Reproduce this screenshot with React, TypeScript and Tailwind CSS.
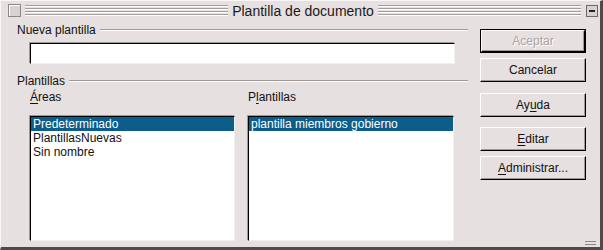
import React from 'react'

const font = "font-['Liberation_Sans',Arial,sans-serif]"

function Stripes() {
  return (
    <div className="flex-1 h-[11px] bg-[repeating-linear-gradient(to_bottom,#a29c9c_0px,#a29c9c_1px,#ffffff_1px,#ffffff_2px,transparent_2px,transparent_3px)]" />
  )
}

function GroupHeader({ label }: { label: string }) {
  return (
    <div className="flex items-center h-[14px] gap-[4px] leading-[14px]">
      <span>{label}</span>
      <div className="flex-1 h-[2px] border-t border-t-[#9e9898] border-b border-b-white" />
    </div>
  )
}

function Button({
  children,
  disabled,
  isDefault,
  className = '',
}: {
  children: React.ReactNode
  disabled?: boolean
  isDefault?: boolean
  className?: string
}) {
  const inner = (
    <div
      className={
        'h-full w-full flex items-center justify-center border border-t-white border-l-white border-b-black border-r-black shadow-[inset_-1px_-1px_0_#9e9898] leading-[14px] ' +
        (disabled ? 'text-[#aaa3a3] [text-shadow:1px_1px_0_#ffffff]' : 'text-[#111]')
      }
    >
      {children}
    </div>
  )
  if (isDefault) {
    return <div className={'h-[24px] w-[106px] border border-black ' + className}>{inner}</div>
  }
  return <div className={'h-[24px] w-[106px] ' + className}>{inner}</div>
}

function ListBox({ items, selected }: { items: string[]; selected: number }) {
  return (
    <div className="h-[125px] bg-white border border-t-black border-l-black border-b-[#f4f0f0] border-r-[#f4f0f0] shadow-[-1px_-1px_0_#9e9898]">
      {items.map((it, i) => (
        <div
          key={it}
          className={
            'h-[14px] leading-[14px] pl-[2px] whitespace-nowrap ' +
            (i === selected ? 'bg-[#0c5c8c] text-white' : 'text-[#111]')
          }
        >
          {it}
        </div>
      ))}
    </div>
  )
}

export default function App() {
  return (
    <div
      className={
        'w-[603px] h-[250px] bg-[#e6e0e0] border-l border-t border-l-[#f8f6f6] border-t-[#f8f6f6] border-r-[3px] border-b-[3px] border-r-[#4e4a4a] border-b-[#4e4a4a] relative overflow-hidden text-[12px] text-[#111] ' +
        font
      }
    >
      {/* title bar */}
      <div className="h-[19px] flex items-center">
        <div className="ml-[7px] w-[13px] h-[13px] border border-[#8c8686] bg-[#d8d2d2] shadow-[inset_1px_1px_0_#ffffff]" />
        <div className="ml-[4px] flex-1 flex items-center gap-[4px]">
          <Stripes />
          <span className="text-[14px] leading-[16px] text-[#1a1a1a]">Plantilla de documento</span>
          <Stripes />
        </div>
        <div className="ml-[5px] mr-[2px] w-[12px] h-[12px] border border-[#6e6a6a] bg-[#d8d2d2] flex items-center justify-center">
          <div className="w-[6px] h-[2px] bg-[#222]" />
        </div>
      </div>

      <div className="flex">
        {/* left part */}
        <div className="ml-[16px] w-[451px]">
          <div className="mt-[3px]">
            <GroupHeader label="Nueva plantilla" />
          </div>
          <div className="mt-[6px] ml-[13px] w-[425px] h-[21px] bg-white border border-t-black border-l-black border-b-[#f4f0f0] border-r-[#f4f0f0] shadow-[-1px_-1px_0_#9e9898]" />
          <div className="mt-[10px]">
            <GroupHeader label="Plantillas" />
          </div>
          <div className="ml-[13px] flex gap-[13px]">
            <div className="w-[205px]">
              <div className="mt-[2px] h-[14px] leading-[14px]">
                <span className="underline underline-offset-2">Á</span>reas
              </div>
              <div className="mt-[12px]">
                <ListBox items={['Predeterminado', 'PlantillasNuevas', 'Sin nombre']} selected={0} />
              </div>
            </div>
            <div className="w-[206px]">
              <div className="mt-[2px] h-[14px] leading-[14px]">
                P<span className="underline underline-offset-2">l</span>antillas
              </div>
              <div className="mt-[12px]">
                <ListBox items={['plantilla miembros gobierno']} selected={0} />
              </div>
            </div>
          </div>
        </div>

        {/* buttons */}
        <div className="ml-[12px] w-[106px] flex flex-col">
          <Button isDefault disabled className="mt-[9px]">
            Aceptar
          </Button>
          <Button className="mt-[5px]">Cancelar</Button>
          <Button className="mt-[11px]">
            <span>
              Ay<span className="underline underline-offset-2">u</span>da
            </span>
          </Button>
          <Button className="mt-[10px]">
            <span>
              <span className="underline underline-offset-2">E</span>ditar
            </span>
          </Button>
          <Button className="mt-[5px]">
            <span>
              <span className="underline underline-offset-2">A</span>dministrar...
            </span>
          </Button>
        </div>
      </div>

      {/* resize grip */}
      <div className="absolute right-[4px] bottom-[2px] w-[11px] h-[4px] border-t border-b border-[#8c8686]" />
    </div>
  )
}
